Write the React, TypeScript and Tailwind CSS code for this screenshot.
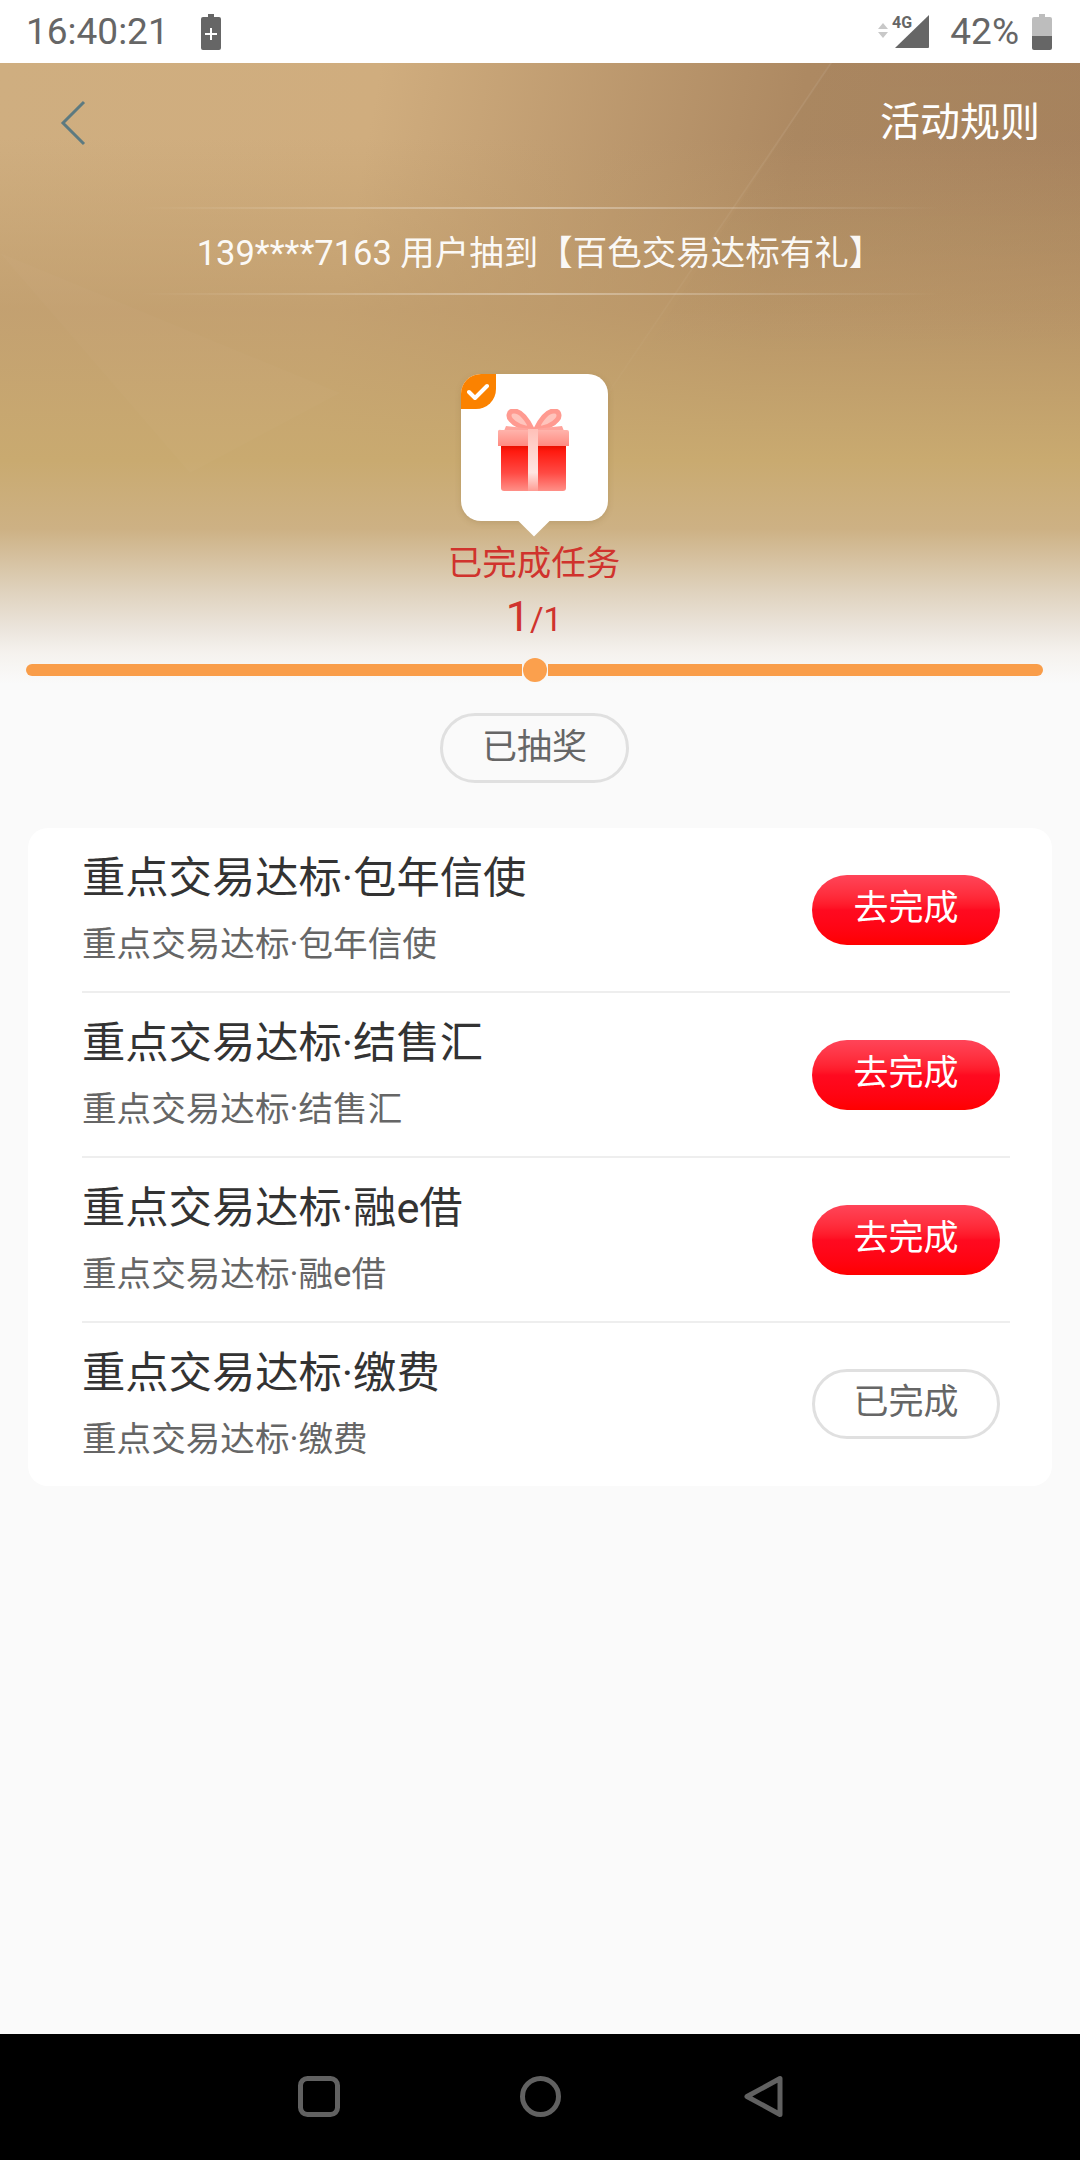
const cjk = "font-['Roboto','Noto_Sans_CJK_SC',sans-serif]";

const tasks = [
    { name: '重点交易达标·包年信使', done: false },
    { name: '重点交易达标·结售汇', done: false },
    { name: '重点交易达标·融e借', done: false },
    { name: '重点交易达标·缴费', done: true },
];

function StatusBar() {
    return (
        <div className="flex h-[63px] items-center bg-white pl-[26px] pr-[28px] text-[#666666]">
            <span className="text-[37px] leading-none font-['Roboto',sans-serif]">16:40:21</span>
            <svg className="ml-[32px]" width="20" height="36" viewBox="0 0 20 36">
                <path d="M7 0h6v3h5a2 2 0 0 1 2 2v29a2 2 0 0 1-2 2H2a2 2 0 0 1-2-2V5a2 2 0 0 1 2-2h5z" fill="#666666" />
                <path d="M9 14h2v5h5v2h-5v5H9v-5H4v-2h5z" fill="#ffffff" />
            </svg>
            <div className="grow" />
            <svg width="51" height="36" viewBox="0 0 51 36">
                <path d="M5 9l5 6H0zM5 24l-5-6h10z" fill="#c8c8c8" />
                <path d="M51 1v32a1 1 0 0 1-1 1H17z" fill="#666666" />
                <text x="14" y="14" fontSize="16" fontWeight="700" fill="#666666" fontFamily="Roboto">4G</text>
            </svg>
            <span className="ml-[21px] text-[37px] leading-none font-['Roboto',sans-serif]">42%</span>
            <svg className="ml-[13px]" width="20" height="36" viewBox="0 0 20 36">
                <path d="M7 0h6v3h5a2 2 0 0 1 2 2v17H0V5a2 2 0 0 1 2-2h5z" fill="#bdbdbd" />
                <path d="M0 22h20v12a2 2 0 0 1-2 2H2a2 2 0 0 1-2-2z" fill="#666666" />
            </svg>
        </div>
    );
}

function GiftIcon() {
    return (
        <svg className="mt-[4px]" width="72" height="82" viewBox="0 0 72 82">
            <defs>
                <linearGradient id="giftBody" x1="0" y1="0" x2="0" y2="1">
                    <stop offset="0" stopColor="#e81000" />
                    <stop offset="0.12" stopColor="#ff1a10" />
                    <stop offset="0.6" stopColor="#ff4a44" />
                    <stop offset="1" stopColor="#ff9088" />
                </linearGradient>
                <linearGradient id="giftLid" x1="0" y1="0" x2="0" y2="1">
                    <stop offset="0" stopColor="#ffb4ac" />
                    <stop offset="1" stopColor="#ff8a80" />
                </linearGradient>
                <linearGradient id="giftBand" x1="0" y1="0" x2="0" y2="1">
                    <stop offset="0" stopColor="#ffc0b8" />
                    <stop offset="0.7" stopColor="#ffe6e2" />
                    <stop offset="1" stopColor="#ff9c94" />
                </linearGradient>
            </defs>
            <path d="M34 20C28 8 22 2 16 2c-6 0-6 6-3 9 4 5 12 8 21 9z" fill="#ffc4bc" stroke="#ff9a90" strokeWidth="5" />
            <path d="M38 20C44 8 50 2 56 2c6 0 6 6 3 9-4 5-12 8-21 9z" fill="#ffc4bc" stroke="#ff9a90" strokeWidth="5" />
            <path d="M8 17l28 3 28-3 2 5H6z" fill="#ffa49c" />
            <path d="M3 21h66a2 2 0 0 1 2 2v14H0V23a2 2 0 0 1 3-2z" fill="url(#giftLid)" />
            <path d="M3 37h65v42a3 3 0 0 1-3 3H6a3 3 0 0 1-3-3z" fill="url(#giftBody)" />
            <rect x="30" y="20" width="10" height="62" fill="url(#giftBand)" />
        </svg>
    );
}

function Hero() {
    return (
        <div className="relative h-[621px] bg-[linear-gradient(100deg,#cfae80_0%,#d0ad7e_32%,#ad8962_68%,#a8835e_100%)]">
            <div className="absolute inset-0 bg-[linear-gradient(to_bottom,rgba(190,155,106,0)_12%,rgba(190,155,106,0.7)_40%,rgba(201,170,112,1)_64%,#cdb184_75%,#dfd2bd_85%,#ece6de_91.5%,#f5f2ee_95%,#fafafa_100%)]" />
            <svg className="absolute inset-0" width="1080" height="621" viewBox="0 0 1080 621">
                <defs>
                    <linearGradient id="facet" x1="0" y1="0" x2="0" y2="1">
                        <stop offset="0" stopColor="#000000" stopOpacity="0.02" />
                        <stop offset="1" stopColor="#000000" stopOpacity="0" />
                    </linearGradient>
                    <linearGradient id="edge" x1="0" y1="0" x2="0" y2="1">
                        <stop offset="0" stopColor="#ffffff" stopOpacity="0.08" />
                        <stop offset="1" stopColor="#ffffff" stopOpacity="0" />
                    </linearGradient>
                </defs>
                <path d="M830 0H1080V330H618z" fill="url(#facet)" />
                <path d="M830 0L560 400L562 400L832 0z" fill="url(#edge)" />
                <path d="M0 190L190 410L340 330L0 190z" fill="#ffffff" fillOpacity="0.02" />
            </svg>
            <div className="relative flex h-[120px] items-center justify-between pl-[60px] pr-[40px]">
                <svg width="26" height="46" viewBox="0 0 26 46">
                    <path d="M24 2L3 23l21 21" fill="none" stroke="#5d7a80" strokeWidth="3" />
                </svg>
                <span className={`text-[40px] leading-none text-white ${cjk}`}>活动规则</span>
            </div>
            <div className="relative mt-[24px] flex justify-center">
                <div className={`flex h-[88px] w-[800px] items-center justify-center border-y-2 border-y-transparent text-[34.5px] text-white/95 [border-image:linear-gradient(to_right,transparent,rgba(255,255,255,0.35),transparent)_1] ${cjk}`}>
                    <span className="mt-[6px]">139****7163 用户抽到【百色交易达标有礼】</span>
                </div>
            </div>
            <div className="relative mt-[79px] flex flex-col items-center pr-[12px]">
                <div className="relative flex h-[147px] w-[147px] items-center justify-center rounded-[20px] bg-white shadow-[0_2px_6px_rgba(120,90,40,0.2)]">
                    <div className="absolute left-0 top-0 flex h-[35px] w-[35px] items-center justify-center rounded-br-[20px] rounded-tl-[20px] bg-[#fb8200]">
                        <svg width="22" height="18" viewBox="0 0 22 18">
                            <path d="M2 9l6 6L20 3" fill="none" stroke="#ffffff" strokeWidth="4" strokeLinecap="round" strokeLinejoin="round" />
                        </svg>
                    </div>
                    <GiftIcon />
                    <div className="absolute -bottom-[11px] left-[62px] h-[22px] w-[22px] rotate-45 bg-white" />
                </div>
                <div className={`mt-[20px] text-[34.5px] leading-[44px] text-[#d0332d] ${cjk}`}>已完成任务</div>
                <div className="mt-[7px] flex items-baseline leading-[48px] text-[#d0332d] font-['Roboto',sans-serif]">
                    <span className="text-[43px]">1</span>
                    <span className="text-[33px]">/1</span>
                </div>
            </div>
        </div>
    );
}

function ProgressBar() {
    return (
        <div className="relative -mt-[26px] flex h-[24px] items-center pl-[26px] pr-[37px]">
            <div className="h-[12px] w-[496px] rounded-l-full bg-[#f99d49]" />
            <div className="mx-[1px] h-[24px] w-[24px] rounded-full bg-[#fba04d]" />
            <div className="h-[12px] grow rounded-r-full bg-[#f99d49]" />
        </div>
    );
}

function TaskRow({ name, done, last }: { name: string, done: boolean, last: boolean }) {
    return (
        <div className={`ml-[54px] mr-[42px] flex items-center justify-between pr-[10px] ${last ? 'h-[163px]' : 'h-[165px] border-b-2 border-[#eeeeee]'} ${cjk}`}>
            <div className="mb-[3px] flex flex-col">
                <span className="text-[43.3px] leading-[60px] text-[#333333]">{name}</span>
                <span className="mt-[11px] text-[34.6px] leading-[48px] text-[#666666]">{name}</span>
            </div>
            {done ? (
                <div className="mb-[2px] flex h-[70px] w-[188px] items-center justify-center rounded-full border-[3px] border-[#e0e0e0] text-[35px] text-[#666666]">已完成</div>
            ) : (
                <div className="flex h-[70px] w-[188px] items-center justify-center rounded-full bg-gradient-to-b from-[#ff4458] via-[#ff0a20] to-[#ff0000] text-[35px] text-white">去完成</div>
            )}
        </div>
    );
}

export default function App() {
    return (
        <div className="flex h-[2160px] w-[1080px] flex-col bg-[#fafafa]">
            <StatusBar />
            <Hero />
            <ProgressBar />
            <div className="mt-[31px] flex justify-center pr-[11px]">
                <div className={`flex h-[70px] w-[189px] items-center justify-center rounded-full border-[3px] border-[#e0e0e0] text-[35px] text-[#666666] ${cjk}`}>已抽奖</div>
            </div>
            <div className="mx-[28px] mt-[45px] rounded-[20px] bg-white">
                {tasks.map((task, i) => (
                    <TaskRow key={task.name} name={task.name} done={task.done} last={i === tasks.length - 1} />
                ))}
            </div>
            <div className="grow" />
            <div className="flex h-[126px] items-center bg-black">
                <svg width="1080" height="126" viewBox="0 0 1080 126">
                    <rect x="300.5" y="44.5" width="37" height="36" rx="7" fill="none" stroke="#616161" strokeWidth="5" />
                    <ellipse cx="540.5" cy="62.5" rx="18" ry="18" fill="none" stroke="#616161" strokeWidth="5" />
                    <path d="M780 44.5v36l-33-18z" fill="none" stroke="#616161" strokeWidth="5" strokeLinejoin="round" />
                </svg>
            </div>
        </div>
    );
}
